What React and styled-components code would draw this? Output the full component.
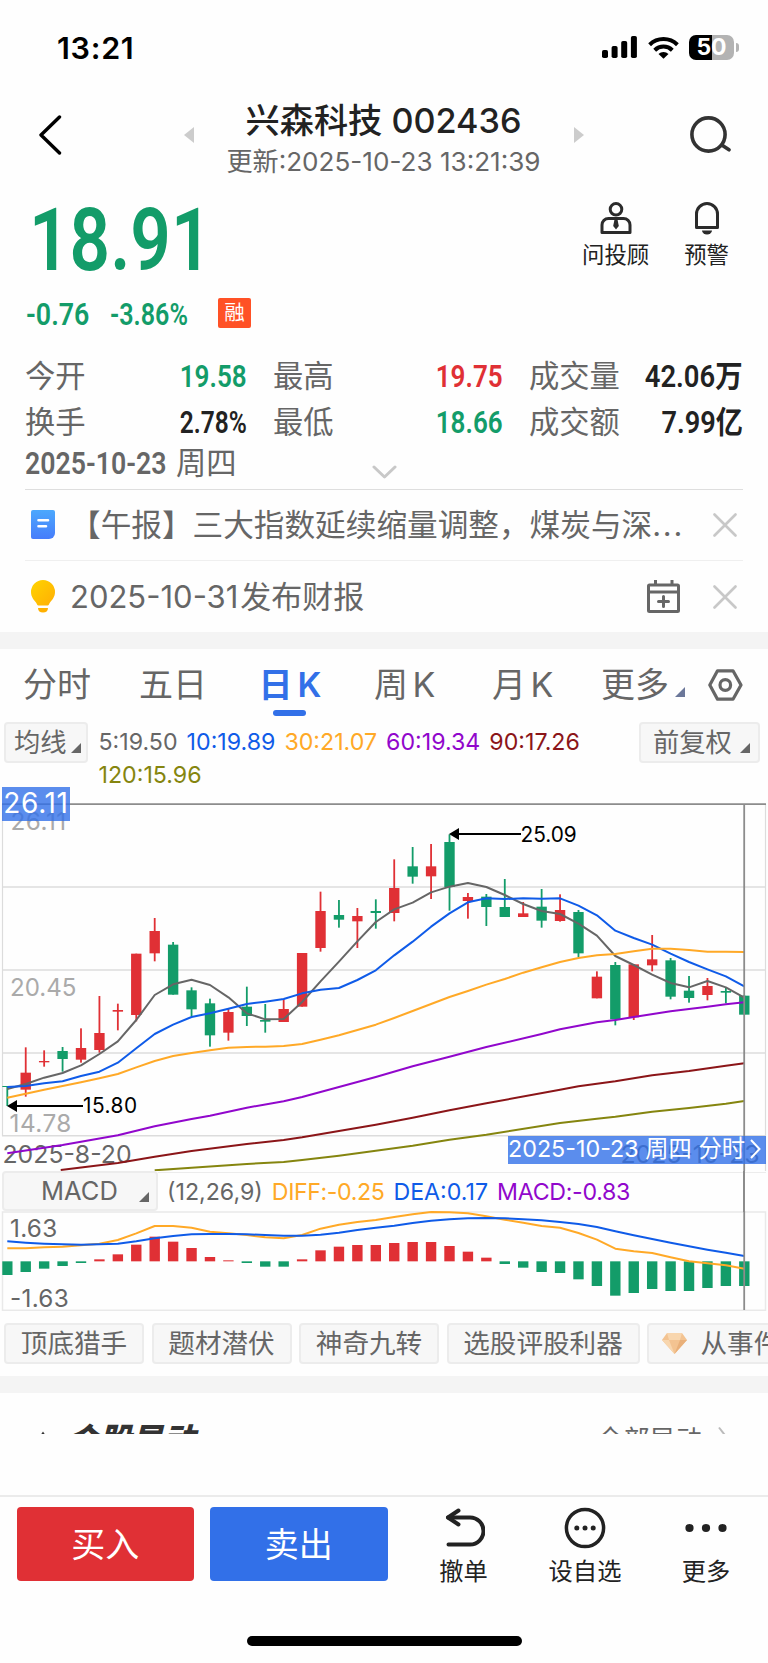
import React, { useState } from 'react';
import styled, { createGlobalStyle, css } from 'styled-components';

const GREEN = '#139c69';
const RED = '#e03035';
const BLUE = '#3270e8';
const GRAY = '#666666';
const DARK = '#222222';

const GlobalStyle = createGlobalStyle`
    * {
        box-sizing: border-box;
    }
    body {
        margin: 0;
        background-color: #fefefe;
        color: ${GRAY};
        font-family: Inter, 'Noto Sans CJK SC', sans-serif;
    }
    button {
        font-family: inherit;
        color: inherit;
        border: none;
        background: none;
        padding: 0;
        margin: 0;
    }
    svg {
        display: block;
        flex-shrink: 0;
    }
`;

const Page = styled.main`
    width: 768px;
    height: 1663px;
    overflow: hidden;
    display: flex;
    flex-direction: column;
`;

// 窄体数字，行情价格用
const Num = styled.span`
    display: inline-block;
    font-family: Roboto, 'Noto Sans CJK SC', sans-serif;
    font-weight: 600;
    font-size: ${(props) => props.$size || 31}px;
    line-height: 1;
    color: ${(props) => props.$color || DARK};
    transform: scaleX(${(props) => props.$stretch || 0.84});
    transform-origin: ${(props) => props.$origin || 'left'} center;
    white-space: nowrap;
`;

/* ---------- 状态栏 ---------- */
const StatusBar = styled.div`
    height: 95px;
    padding: 0 30px 0 57px;
    display: flex;
    align-items: center;
    justify-content: space-between;
    color: #000;
    flex-shrink: 0;
`;
const Clock = styled.span`
    font-size: 30.5px;
    font-weight: 600;
    line-height: 36px;
    letter-spacing: 0.7px;
`;
const StatusIcons = styled.div`
    display: flex;
    align-items: center;
    gap: 10.5px;
    margin-bottom: 1px;
`;
const Battery = styled.div`
    width: 45px;
    height: 25px;
    margin-right: 4px;
    border-radius: 7px;
    background: linear-gradient(90deg, #000 50%, #b3b3b3 50%);
    color: #fff;
    font-size: 23px;
    font-weight: 700;
    line-height: 25px;
    text-align: center;
    position: relative;
    &::after {
        content: '';
        position: absolute;
        left: 46.5px;
        top: 8px;
        width: 3px;
        height: 9px;
        border-radius: 0 4px 4px 0;
        background-color: #b3b3b3;
    }
`;

/* ---------- 标题 ---------- */
const Header = styled.header`
    height: 95px;
    padding: 0 37px 0 38px;
    display: flex;
    justify-content: space-between;
    flex-shrink: 0;
`;
const IconBtn = styled.button`
    display: flex;
    align-items: flex-start;
    width: ${(props) => (props.$width ? `${props.$width}px` : 'auto')};
    padding-top: ${(props) => props.$top || 0}px;
`;
const Switcher = styled.div`
    display: flex;
    justify-content: space-between;
    width: 400px;
    margin-right: 2px;
`;
const TitleBox = styled.div`
    display: flex;
    flex-direction: column;
    align-items: center;
    padding-top: 5px;
`;
const Title = styled.h1`
    margin: 0;
    font-size: 34.2px;
    line-height: 42px;
    font-weight: 500;
    color: ${DARK};
    white-space: nowrap;
`;
const Updated = styled.div`
    font-size: 26.1px;
    line-height: 39px;
    white-space: nowrap;
`;

/* ---------- 价格 ---------- */
const Quote = styled.section`
    height: 152px;
    display: flex;
    justify-content: space-between;
    padding: 0 39px 0 26px;
    flex-shrink: 0;
`;
const PriceBox = styled.div`
    width: 240px;
`;
const PriceRow = styled.div`
    height: 100px;
    padding-left: 3px;
    display: flex;
    align-items: center;
`;
const ChangeRow = styled.div`
    display: flex;
    align-items: center;
    height: 48px;
`;
const ChangeCell = styled.div`
    width: ${(props) => props.$width}px;
`;
const Badge = styled.span`
    width: 33px;
    height: 30px;
    border-radius: 2px;
    margin-top: -3px;
    background-color: #ff5126;
    color: #fff;
    font-size: 20.5px;
    line-height: 29px;
    text-align: center;
`;
const QuickActions = styled.div`
    display: flex;
    gap: 35px;
    padding-top: 11px;
`;
const QuickAction = styled.button`
    display: flex;
    flex-direction: column;
    align-items: center;
    height: 75px;
    gap: 3px;
    font-size: 22.4px;
    line-height: 34px;
    color: ${DARK};
    white-space: nowrap;
`;

/* ---------- 统计 ---------- */
const Stats = styled.section`
    height: 147.5px;
    margin: 0 25px;
    padding-top: 11px;
    border-bottom: 1.5px solid #dedede;
    flex-shrink: 0;
`;
const StatRow = styled.div`
    display: grid;
    grid-template-columns: 222px 230px 214px;
    column-gap: 26px;
    height: 46px;
`;
const Stat = styled.div`
    display: flex;
    align-items: center;
    justify-content: space-between;
    font-size: 30.3px;
    line-height: 46px;
`;
const DateRow = styled.div`
    height: 36px;
    display: grid;
    grid-template-columns: 151px 1fr;
    align-items: center;
    font-size: 30.3px;
    line-height: 36px;
`;
const DateRest = styled.div`
    display: flex;
    align-items: center;
    gap: 135px;
    svg {
        margin-top: 17px;
    }
`;

/* ---------- 消息 ---------- */
const News = styled.div`
    height: ${(props) => props.$height}px;
    margin: 0 25px;
    padding: 0 6px;
    display: flex;
    align-items: center;
    font-size: ${(props) => props.$size}px;
    border-bottom: ${(props) => (props.$line ? '1.5px solid #efefef' : 'none')};
    flex-shrink: 0;
`;
const NewsText = styled.div`
    flex: 1;
    min-width: 0;
    margin-left: ${(props) => props.$left}px;
    white-space: nowrap;
    line-height: 44px;
`;
const Dots = styled.span`
    letter-spacing: 1.8px;
`;
const NewsTitle = styled.span`
    margin-left: 2px;
`;
const Close = styled.button`
    margin-left: 33px;
`;
const Band = styled.div`
    height: 17px;
    background-color: #f4f4f4;
    flex-shrink: 0;
`;

/* ---------- 周期 ---------- */
const Tabs = styled.nav`
    height: 73px;
    padding: 14px 0 0 23px;
    display: flex;
    align-items: flex-start;
    flex-shrink: 0;
`;
const Tab = styled.button`
    position: relative;
    width: ${(props) => props.$width}px;
    font-size: 34px;
    line-height: 44px;
    text-align: left;
    white-space: nowrap;
    word-spacing: -5px;
    ${(props) =>
        props.$active &&
        css`
            color: ${BLUE};
            font-weight: 600;
            word-spacing: -3.5px;
            &::after {
                content: '';
                position: absolute;
                left: 14.5px;
                top: 47px;
                width: 33px;
                height: 6px;
                border-radius: 3px;
                background-color: ${BLUE};
            }
        `}
`;
const Corner = styled.i`
    display: inline-block;
    width: 0;
    height: 0;
    margin-left: ${(props) => props.$left || 0}px;
    border-bottom: 10px solid ${(props) => props.$color || GRAY};
    border-left: 10px solid transparent;
`;
const Setting = styled.button`
    padding-top: 6px;
`;

/* ---------- 均线 ---------- */
const MaBar = styled.div`
    height: 65px;
    padding: 0 8px 0 4px;
    display: flex;
    align-items: flex-start;
    flex-shrink: 0;
`;
const Picker = styled.button`
    height: ${(props) => props.$height || 41}px;
    width: ${(props) => props.$width}px;
    padding: 0 ${(props) => props.$end || 5}px 0 ${(props) => props.$pad}px;
    border: 2px solid #ececec;
    border-radius: 4px;
    background-color: #f7f7f7;
    display: flex;
    align-items: center;
    justify-content: space-between;
    font-size: ${(props) => props.$size || 26.3}px;
    line-height: 36px;
    white-space: nowrap;
    flex-shrink: 0;
    i {
        margin-top: 11px;
    }
`;
const MaList = styled.div`
    flex: 1;
    display: flex;
    flex-wrap: wrap;
    align-content: flex-start;
    column-gap: 9px;
    padding: 4px 40px 0 10.5px;
`;
const Legend = styled.span`
    font-size: 23.2px;
    line-height: 33px;
    letter-spacing: ${(props) => props.$spacing || 0}px;
    color: ${(props) => props.$color};
    white-space: nowrap;
`;

const ChartBox = styled.div`
    position: relative;
    height: ${(props) => props.$height}px;
    flex-shrink: 0;
`;
const PriceTag = styled.div`
    position: absolute;
    left: 2px;
    top: 0;
    width: 68px;
    height: 34px;
    background-color: rgba(50, 112, 232, 0.8);
    color: #fff;
    font-size: 28px;
    letter-spacing: 0.7px;
    line-height: 32px;
    text-align: center;
`;
const DateTag = styled.div`
    position: absolute;
    right: 2px;
    top: 349px;
    width: 258px;
    height: 28px;
    background-color: rgba(50, 112, 232, 0.8);
    color: #fff;
    font-size: 23.3px;
    line-height: 26px;
    display: flex;
    align-items: center;
    justify-content: space-between;
    padding: 0 5px 2px 0;
    white-space: nowrap;
`;

// 十字光标竖线要穿过指标栏
const MacdBar = styled.div`
    position: relative;
    height: 40px;
    padding-left: 2px;
    display: flex;
    align-items: center;
    gap: 9px;
    flex-shrink: 0;
    span {
        margin-top: 2px;
    }
    &::before {
        content: '';
        position: absolute;
        left: 158px;
        right: 2px;
        top: 1px;
        height: 1px;
        background-color: #ececec;
    }
    &::after {
        content: '';
        position: absolute;
        left: 743.3px;
        top: 0;
        width: 1.8px;
        height: 41px;
        background-color: #8c8c8c;
    }
`;

/* ---------- 标签 ---------- */
const TagRow = styled.div`
    height: 65px;
    padding: 11.5px 0 0 4px;
    display: flex;
    gap: 7.5px;
    overflow: hidden;
    flex-shrink: 0;
`;
const Tag = styled.button`
    width: ${(props) => props.$width}px;
    height: 41px;
    border: 2px solid #ececec;
    border-radius: 4px;
    background-color: #f7f7f7;
    display: flex;
    align-items: center;
    justify-content: ${(props) => (props.$left ? 'flex-start' : 'center')};
    gap: 14px;
    padding-left: ${(props) => (props.$left ? 12.5 : 0)}px;
    font-size: 26.6px;
    line-height: 36px;
    white-space: nowrap;
    flex-shrink: 0;
`;

/* ---------- 异动（被底栏截断） ---------- */
const Moves = styled.div`
    height: 40.5px;
    padding: 28px 40px 0 41px;
    display: flex;
    justify-content: space-between;
    overflow: hidden;
    flex-shrink: 0;
`;
const MovesTitle = styled.div`
    display: flex;
    gap: 22px;
    font-size: 32px;
    line-height: 38px;
    font-weight: 900;
    font-style: italic;
    color: #333;
`;
const MovesMore = styled.div`
    display: flex;
    gap: 16px;
    font-size: 26.2px;
    line-height: 38px;
`;

/* ---------- 底栏 ---------- */
const Footer = styled.footer`
    margin-top: 61px;
    height: 141px;
    border-top: 2px solid #ebebeb;
    padding: 10px 30px 0 16.5px;
    display: flex;
    align-items: flex-start;
    flex-shrink: 0;
`;
const TradeBtn = styled.button`
    width: 177.5px;
    height: 74px;
    margin-right: 16px;
    border-radius: 4px;
    background-color: ${(props) => props.$color};
    color: #fff;
    font-size: 34px;
    line-height: 76px;
`;
const FootItems = styled.div`
    flex: 1;
    display: flex;
    padding-left: 35.5px;
`;
const FootItem = styled.button`
    width: ${(props) => props.$width}px;
    display: flex;
    flex-direction: column;
    align-items: center;
    font-size: 24.3px;
    line-height: 34px;
    color: ${DARK};
    white-space: nowrap;
    svg {
        margin-bottom: 5px;
    }
`;
const HomeBar = styled.div`
    width: 275px;
    height: 10px;
    border-radius: 5px;
    background-color: #000;
    align-self: center;
    flex-shrink: 0;
`;

// 每根K线: [最高, 实体上沿, 实体下沿, 最低, 涨跌]
const candles = [
    [918, 918, 921, 978, 0],
    [802, 878, 929, 950, 1],
    [811, 843, 847, 860, 1],
    [801, 813, 837, 875, 0],
    [745, 804, 839, 848, 1],
    [648, 759, 810, 818, 1],
    [671, 690, 695, 751, 1],
    [521, 521, 705, 724, 1],
    [414, 453, 520, 544, 1],
    [486, 494, 644, 644, 0],
    [622, 631, 688, 708, 0],
    [656, 670, 766, 800, 0],
    [687, 696, 758, 782, 1],
    [620, 680, 708, 738, 0],
    [672, 720, 725, 758, 0],
    [658, 687, 726, 726, 1],
    [519, 519, 680, 680, 1],
    [335, 393, 504, 515, 1],
    [360, 405, 419, 443, 0],
    [384, 408, 424, 504, 1],
    [358, 393, 399, 446, 0],
    [238, 324, 399, 424, 1],
    [201, 259, 290, 311, 0],
    [192, 259, 289, 357, 1],
    [163, 186, 321, 392, 0],
    [339, 351, 363, 416, 1],
    [342, 350, 381, 438, 0],
    [297, 381, 411, 411, 0],
    [366, 400, 411, 411, 1],
    [327, 380, 422, 443, 0],
    [343, 390, 423, 425, 1],
    [390, 396, 520, 531, 0],
    [574, 590, 655, 655, 1],
    [546, 555, 718, 736, 0],
    [553, 553, 712, 720, 1],
    [465, 538, 556, 574, 1],
    [534, 541, 650, 658, 0],
    [588, 632, 654, 668, 0],
    [594, 618, 645, 661, 1],
    [622, 633, 638, 670, 0],
    [645, 647, 704, 704, 0],
];

const ma5 = [
    927, 912, 893, 879, 856, 822, 784, 720, 645, 613, 599, 615, 652, 700, 718, 717, 666, 604, 545, 484, 426, 388, 368,
    337, 320, 309, 321, 345, 372, 393, 402, 431, 467, 528, 555, 584, 609, 622, 603, 622, 653,
];
const ma10 = [
    921, 918, 910, 904, 888, 875, 848, 805, 762, 734, 711, 700, 686, 672, 665, 657, 640, 629, 624, 600, 571, 526, 485,
    440, 400, 367, 355, 357, 355, 356, 355, 377, 406, 452, 474, 494, 521, 546, 568, 589, 619,
];
const ma30 = [
    953, 941, 929, 918, 907, 895, 882, 862, 843, 828, 819, 811, 803, 801, 800, 798, 792, 779, 766, 750, 734, 714, 693,
    672, 651, 633, 614, 597, 578, 562, 546, 534, 526, 522, 514, 506, 506, 510, 515, 515, 516,
];
// 长周期均线只取部分点: [序号, y]
const ma60 = [
    [0, 1120], [3, 1095], [6, 1066], [8, 1039], [10, 1017], [11, 1007], [13, 983], [15, 964], [16, 951], [18, 921],
    [20, 891], [22, 859], [24, 830], [26, 801], [29, 762], [30, 748], [32, 727], [33, 720], [34, 711], [36, 694],
    [38, 680], [39, 673], [40, 667],
];
const ma90 = [
    [2.9, 1170], [6, 1149], [8, 1130], [10, 1113], [13, 1092], [15, 1080], [16, 1072], [18, 1053], [20, 1034],
    [22, 1013], [24, 991], [26, 970], [30, 929], [31, 919], [33, 904], [35, 886], [37, 873], [39, 857], [40, 850],
];
const ma120 = [
    [8, 1171], [10, 1163], [13, 1152], [15, 1146], [16, 1140], [18, 1127], [20, 1112], [22, 1097], [24, 1079],
    [26, 1064], [30, 1029], [32, 1016], [33, 1010], [35, 995], [37, 984], [39, 971], [40, 963],
];

const bars = [
    405, 396, 386, 378, 369, 358, 343, 314, 290, 305, 324, 351, 361, 369, 380, 380, 358, 331, 320, 315, 315, 309, 306,
    306, 318, 335, 353, 372, 383, 396, 399, 418, 438, 467, 459, 447, 453, 453, 444, 438, 438,
];
const diff = [
    325, 325, 322, 320, 316, 311, 300, 280, 258, 258, 263, 275, 280, 285, 292, 295, 285, 266, 254, 246, 240, 231, 223,
    216, 217, 220, 229, 239, 248, 258, 263, 279, 299, 326, 334, 339, 352, 364, 370, 376, 386,
];
const dea = [
    304, 308, 311, 313, 314, 313, 311, 304, 295, 288, 283, 282, 282, 283, 285, 287, 287, 284, 278, 270, 263, 257, 249,
    242, 238, 235, 234, 235, 238, 241, 246, 252, 261, 274, 286, 297, 308, 319, 329, 338, 348,
];

const xAt = (i) => 7.3 + i * 18.425;
const toPoints = (list) =>
    list.map((v, i) => (Array.isArray(v) ? `${xAt(v[0])},${v[1] / 3}` : `${xAt(i)},${v / 3}`)).join(' ');

function KLine() {
    return (
        <svg width="768" height="384" viewBox="0 7 768 384" fontFamily="Inter, sans-serif">
            {[107, 190, 273, 355.7].map((y) => (
                <line key={y} x1="2" x2="766" y1={y} y2={y} stroke="#dcdcdc" strokeWidth="1.5" />
            ))}
            <path d="M2.5 24V356M765.5 24V391" stroke="#dcdcdc" strokeWidth="1.2" />
            <text x="10.5" y="49.5" fontSize="24.3" letterSpacing="0.5" fill="#aaa">26.11</text>
            <text x="10" y="215.5" fontSize="24.1" fill="#aaa">20.45</text>
            <text x="9.5" y="352" fontSize="24.3" letterSpacing="0.5" fill="#aaa">14.78</text>
            <text x="2.5" y="382.5" fontSize="24.8" fill={GRAY}>2025-8-20</text>
            <text x="620.5" y="382.5" fontSize="24.8" fill={GRAY}>2025-10-23</text>
            {candles.map(([high, top, bottom, low, up], i) => {
                const x = xAt(i);
                const left = Math.max(x - 5.2, 2.3);
                const color = up ? RED : GREEN;
                return (
                    <g key={i} fill={color}>
                        <rect x={x - 0.9} y={high / 3} width="1.8" height={(low - high) / 3} />
                        <rect x={left} y={top / 3} width={i === 0 ? 5.4 : x + 5.2 - left} height={(bottom - top) / 3} />
                    </g>
                );
            })}
            <g fill="none" strokeWidth="2" strokeLinejoin="round">
                <polyline points={toPoints(ma5)} stroke="#666" />
                <polyline points={toPoints(ma10)} stroke="#0f5be8" />
                <polyline points={toPoints(ma30)} stroke="#ffa927" />
                <polyline points={toPoints(ma60)} stroke="#9107cc" />
                <polyline points={toPoints(ma90)} stroke="#8b1518" />
                <polyline points={toPoints(ma120)} stroke="#85850f" />
            </g>
            <path d="M2 24.2H766M744.2 24V391" stroke="#8c8c8c" strokeWidth="1.8" fill="none" />
            <g fill="#000" stroke="none" fontSize="20.8">
                <path d="M449 54l10-6v5h62v2h-62v5z" />
                <text x="520.5" y="61.5">25.09</text>
                <path d="M7 326l10-6v5h66v2H17v5z" />
                <text x="83" y="333.3" letterSpacing="0.5">15.80</text>
            </g>
        </svg>
    );
}

function Macd() {
    return (
        <svg width="768" height="100" viewBox="0 71 768 100" fontFamily="Inter, sans-serif">
            <path d="M2.5 72H765.5V170.3H2.5z" fill="none" stroke="#e9e9e9" strokeWidth="1.5" />
            <text x="10" y="97" fontSize="24.3" letterSpacing="0.3" fill={GRAY}>1.63</text>
            <text x="10" y="166.5" fontSize="24.3" letterSpacing="0.3" fill={GRAY}>-1.63</text>
            {bars.map((v, i) => {
                const x = Math.max(xAt(i) - 5.2, 2.3);
                return (
                    <rect
                        key={i}
                        x={x}
                        y={Math.min(v, 364) / 3}
                        width={xAt(i) + 5.2 - x}
                        height={Math.abs(v - 364) / 3}
                        fill={v > 364 ? GREEN : RED}
                    />
                );
            })}
            <g fill="none" strokeWidth="2" strokeLinejoin="round">
                <polyline points={toPoints(diff)} stroke="#ffa927" />
                <polyline points={toPoints(dea)} stroke="#0f5be8" />
            </g>
            <path d="M744.2 71V170" stroke="#8c8c8c" strokeWidth="1.8" />
        </svg>
    );
}

const CloseIcon = () => (
    <svg width="24" height="24" viewBox="0 0 24 24" stroke="#c8c8c8" strokeWidth="2.6" strokeLinecap="round">
        <path d="M1.5 1.5l21 21M22.5 1.5l-21 21" />
    </svg>
);

const tabs = [
    ['分时', 116],
    ['五日', 119.5],
    ['日 K', 115.5],
    ['周 K', 118],
    ['月 K', 109],
];

// [名称, 数值, 颜色, 横向压缩]
const stats = [
    [
        ['今开', '19.58', GREEN, 0.84],
        ['最高', '19.75', RED, 0.84],
        ['成交量', '42.06万', DARK, 0.885],
    ],
    [
        ['换手', '2.78%', DARK, 0.79],
        ['最低', '18.66', GREEN, 0.84],
        ['成交额', '7.99亿', DARK, 0.875],
    ],
];

const maLegend = [
    ['5:19.50', GRAY],
    ['10:19.89', '#0f5be8'],
    ['30:21.07', '#ffa927'],
    ['60:19.34', '#9107cc'],
    ['90:17.26', '#8b1518'],
    ['120:15.96', '#85850f'],
];

const tags = [
    ['顶底猎手', 140],
    ['题材潜伏', 140],
    ['神奇九转', 140],
    ['选股评股利器', 193],
];

function App() {
    const [tab, setTab] = useState('日 K'); // 当前周期

    return (
        <Page>
            <GlobalStyle />
            <StatusBar>
                <Clock>13:21</Clock>
                <StatusIcons>
                    <svg width="35" height="22" viewBox="0 0 35 22">
                        <rect x="0" y="14" width="6" height="8" rx="1.8" />
                        <rect x="9.6" y="10" width="6" height="12" rx="1.8" />
                        <rect x="19.2" y="5" width="6" height="17" rx="1.8" />
                        <rect x="28.9" y="0" width="6" height="22" rx="1.8" />
                    </svg>
                    <svg width="31" height="23" viewBox="0 0 31 23" fill="none" stroke="#000" strokeWidth="4">
                        <path d="M1.6 8.7a20 20 0 0 1 27.8 0" />
                        <path d="M6.7 14.2a12.6 12.6 0 0 1 17.6 0" />
                        <path d="M15.5 22.8l-5-4.9a7.2 7.2 0 0 1 10 0z" fill="#000" stroke="none" />
                    </svg>
                    <Battery>50</Battery>
                </StatusIcons>
            </StatusBar>

            <Header>
                <IconBtn $top={20} $width={41}>
                    <svg width="24" height="40" viewBox="0 0 24 40" fill="none" stroke="#000" strokeWidth="3.4">
                        <path d="M21.5 2L3 20l18.5 18" strokeLinecap="round" strokeLinejoin="round" />
                    </svg>
                </IconBtn>
                <Switcher>
                    <IconBtn $top={32}>
                        <svg width="10" height="16" viewBox="0 0 10 16" fill="#ccc">
                            <path d="M10 0v16L0 8z" />
                        </svg>
                    </IconBtn>
                    <TitleBox>
                        <Title>兴森科技 002436</Title>
                        <Updated>更新:2025-10-23 13:21:39</Updated>
                    </TitleBox>
                    <IconBtn $top={32}>
                        <svg width="10" height="16" viewBox="0 0 10 16" fill="#ccc">
                            <path d="M0 0v16l10-8z" />
                        </svg>
                    </IconBtn>
                </Switcher>
                <IconBtn $top={21}>
                    <svg width="41" height="38" viewBox="0 0 41 38" fill="none" stroke="#333" strokeWidth="3.6">
                        <circle cx="18.5" cy="18.5" r="16.6" />
                        <path d="M32.5 29.5l6.5 4.3" strokeLinecap="round" />
                    </svg>
                </IconBtn>
            </Header>

            <Quote>
                <PriceBox>
                    <PriceRow>
                        <Num $size={88} $color={GREEN} $stretch={0.807}>18.91</Num>
                    </PriceRow>
                    <ChangeRow>
                        <ChangeCell $width={84}>
                            <Num $color={GREEN} $stretch={0.865}>-0.76</Num>
                        </ChangeCell>
                        <ChangeCell $width={108}>
                            <Num $color={GREEN} $stretch={0.81}>-3.86%</Num>
                        </ChangeCell>
                        <Badge>融</Badge>
                    </ChangeRow>
                </PriceBox>
                <QuickActions>
                    <QuickAction>
                        <svg width="32" height="34" viewBox="0 0 32 34" fill="none" stroke="#2b2b2b" strokeWidth="3">
                            <circle cx="16" cy="8.3" r="5.8" />
                            <path d="M2 31.5V24a6.5 6.5 0 0 1 6.5-6.5h15A6.5 6.5 0 0 1 30 24v7.5z" strokeLinejoin="round" />
                            <path d="M14.5 18.5h3l1.3 6.5-2.8 3.5-2.8-3.5z" fill="#2b2b2b" stroke="none" />
                        </svg>
                        问投顾
                    </QuickAction>
                    <QuickAction>
                        <svg width="26" height="34" viewBox="0 0 26 34" fill="none" stroke="#2b2b2b" strokeWidth="3">
                            <path d="M2.5 26.5V13a10.5 10.5 0 0 1 21 0v13.5z" strokeLinejoin="round" />
                            <path d="M8 29.5h10a5 4 0 0 1-10 0z" fill="#2b2b2b" stroke="none" />
                        </svg>
                        预警
                    </QuickAction>
                </QuickActions>
            </Quote>

            <Stats>
                {stats.map((row, i) => (
                    <StatRow key={i}>
                        {row.map(([label, value, color, stretch]) => (
                            <Stat key={label}>
                                {label}
                                <Num $color={color} $stretch={stretch} $origin="right">
                                    {value}
                                </Num>
                            </Stat>
                        ))}
                    </StatRow>
                ))}
                <DateRow>
                    <Num $color={GRAY} $stretch={0.86}>2025-10-23</Num>
                    <DateRest>
                        周四
                        <svg width="25" height="14" viewBox="0 0 25 14" fill="none" stroke="#c8c8c8" strokeWidth="3">
                            <path d="M2 2l10.5 10L23 2" strokeLinecap="round" strokeLinejoin="round" />
                        </svg>
                    </DateRest>
                </DateRow>
            </Stats>

            <News $height={71.5} $size={30.65} $line>
                <svg width="24" height="30" viewBox="0 0 24 30">
                    <defs>
                        <linearGradient id="doc" x1="0" y1="0" x2="0" y2="1">
                            <stop offset="0" stopColor="#4ca8fd" />
                            <stop offset="1" stopColor="#467dfb" />
                        </linearGradient>
                    </defs>
                    <path d="M2 0h20a2 2 0 0 1 2 2v21a6 6 0 0 1-6 6H2a2 2 0 0 1-2-2V2a2 2 0 0 1 2-2z" fill="url(#doc)" />
                    <path d="M7.5 10.2H17M7.5 16.2H15" stroke="#fff" strokeWidth="2.6" strokeLinecap="round" />
                </svg>
                <NewsText $left={15}>
                    【午报】三大指数延续缩量调整，煤炭与深<Dots>...</Dots>
                </NewsText>
                <Close>
                    <CloseIcon />
                </Close>
            </News>
            <News $height={71} $size={31}>
                <svg width="24" height="33" viewBox="0 0 24 33">
                    <defs>
                        <linearGradient id="bulb" x1="0" y1="0" x2="1" y2="1">
                            <stop offset="0" stopColor="#ffd400" />
                            <stop offset="1" stopColor="#ffae05" />
                        </linearGradient>
                    </defs>
                    <path
                        d="M12 0a12 12 0 0 1 12 12c0 5-3 8-5 10.5-1 1.5-1 3-2.5 3h-9C6 25.5 6 24 5 22.5 3 20 0 17 0 12A12 12 0 0 1 12 0z"
                        fill="url(#bulb)"
                    />
                    <path d="M7 28h10c0 3-2 4.5-5 4.5S7 31 7 28z" fill="#ffb000" />
                </svg>
                <NewsText $left={15}>
                    2025-10-31<NewsTitle>发布财报</NewsTitle>
                </NewsText>
                <svg width="33" height="33" viewBox="0 0 33 33" fill="none" stroke="#666" strokeWidth="3">
                    <rect x="1.5" y="5" width="30" height="26.5" rx="1" />
                    <path d="M1.5 12h30M8.5 0v5M25 0v5" />
                    <path d="M16.5 16.5v10M11.5 21.5h10" strokeLinecap="round" />
                </svg>
                <Close>
                    <CloseIcon />
                </Close>
            </News>
            <Band />

            <Tabs>
                {tabs.map(([name, width]) => (
                    <Tab key={name} $width={width} $active={tab === name} onClick={() => setTab(name)}>
                        {name}
                    </Tab>
                ))}
                <Tab $width={107}>
                    更多
                    <Corner $color="#6b7799" $left={6} />
                </Tab>
                <Setting>
                    <svg width="35" height="32" viewBox="0 0 35 32" fill="none" stroke="#666" strokeWidth="3.2">
                        <path d="M9.5 1.8H25L33 16l-8 14.2H9.5L1.8 16z" strokeLinejoin="round" />
                        <circle cx="17.3" cy="16" r="5.3" />
                    </svg>
                </Setting>
            </Tabs>

            <MaBar>
                <Picker $width={84} $pad={8}>
                    均线
                    <Corner />
                </Picker>
                <MaList>
                    {maLegend.map(([text, color]) => (
                        <Legend key={text} $color={color}>
                            {text}
                        </Legend>
                    ))}
                </MaList>
                <Picker $width={121} $pad={12} $end={8}>
                    前复权
                    <Corner />
                </Picker>
            </MaBar>

            <ChartBox $height={384}>
                <KLine />
                <PriceTag>26.11</PriceTag>
                <DateTag>
                    2025-10-23 周四 分时
                    <svg width="11" height="20" viewBox="0 0 11 20" fill="none" stroke="#fff" strokeWidth="2">
                        <path d="M1 1l8.5 9L1 19" />
                    </svg>
                </DateTag>
            </ChartBox>

            <MacdBar>
                <Picker $width={156} $height={40} $pad={37} $end={7} $size={25.5}>
                    MACD
                    <Corner />
                </Picker>
                <Legend $color={GRAY}>(12,26,9)</Legend>
                <Legend $color="#ffa927" $spacing={-0.4}>DIFF:-0.25</Legend>
                <Legend $color="#0f5be8">DEA:0.17</Legend>
                <Legend $color="#9107cc" $spacing={-0.3}>MACD:-0.83</Legend>
            </MacdBar>
            <Macd />

            <TagRow>
                {tags.map(([name, width]) => (
                    <Tag key={name} $width={width}>
                        {name}
                    </Tag>
                ))}
                <Tag $width={200} $left>
                    <svg width="25" height="21" viewBox="0 0 25 21">
                        <path d="M5 0h15l5 7-12.5 14L0 7z" fill="#f3c391" />
                        <path d="M0 7h7l5.5 14zM5 0h15l-2 7H7z" fill="#f8d6ae" />
                        <path d="M25 7h-7l-5.5 14z" fill="#e9b07a" />
                    </svg>
                    从事件
                </Tag>
            </TagRow>
            <Band />

            <Moves>
                <MovesTitle>
                    <svg width="4" height="16" viewBox="0 0 4 16">
                        <path d="M2 10.5l2 3H0z" fill="#333" />
                    </svg>
                    个股异动
                </MovesTitle>
                <MovesMore>
                    全部异动
                    <svg width="10" height="20" viewBox="0 0 10 20" fill="none" stroke="#bbb" strokeWidth="2">
                        <path d="M1 6.5l7 9" />
                    </svg>
                </MovesMore>
            </Moves>

            <Footer>
                <TradeBtn $color={RED}>买入</TradeBtn>
                <TradeBtn $color={BLUE}>卖出</TradeBtn>
                <FootItems>
                    <FootItem $width={49}>
                        <svg width="42" height="42" viewBox="0 0 42 42" fill="none" stroke="#222" strokeWidth="4">
                            <path d="M5 10.5h22a13.5 13.5 0 0 1 0 27H5.5" strokeLinecap="round" />
                            <path d="M15.5 3.5L5 10.5l10.5 7" strokeLinecap="round" strokeLinejoin="round" />
                        </svg>
                        撤单
                    </FootItem>
                    <FootItem $width={194}>
                        <svg width="42" height="42" viewBox="0 0 42 42" fill="none" stroke="#222" strokeWidth="3.5">
                            <circle cx="21" cy="21" r="18.6" />
                            <g fill="#222" stroke="none">
                                <circle cx="12.8" cy="21" r="2.5" />
                                <circle cx="21" cy="21" r="2.5" />
                                <circle cx="29.2" cy="21" r="2.5" />
                            </g>
                        </svg>
                        设自选
                    </FootItem>
                    <FootItem $width={48}>
                        <svg width="42" height="42" viewBox="0 0 42 42" fill="#222">
                            <circle cx="4.5" cy="21" r="4.1" />
                            <circle cx="21" cy="21" r="4.1" />
                            <circle cx="37.5" cy="21" r="4.1" />
                        </svg>
                        更多
                    </FootItem>
                </FootItems>
            </Footer>
            <HomeBar />
        </Page>
    );
}

export default App;
